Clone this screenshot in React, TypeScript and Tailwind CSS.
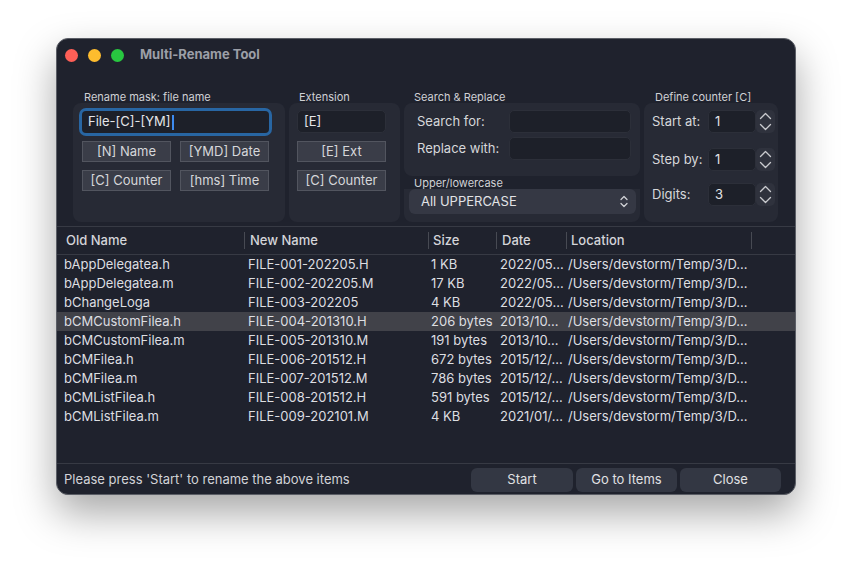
import React from "react";

const rows = [
  ["bAppDelegatea.h", "FILE-001-202205.H", "1 KB", "2022/05...", "/Users/devstorm/Temp/3/D..."],
  ["bAppDelegatea.m", "FILE-002-202205.M", "17 KB", "2022/05...", "/Users/devstorm/Temp/3/D..."],
  ["bChangeLoga", "FILE-003-202205", "4 KB", "2022/05...", "/Users/devstorm/Temp/3/D..."],
  ["bCMCustomFilea.h", "FILE-004-201310.H", "206 bytes", "2013/10...", "/Users/devstorm/Temp/3/D..."],
  ["bCMCustomFilea.m", "FILE-005-201310.M", "191 bytes", "2013/10...", "/Users/devstorm/Temp/3/D..."],
  ["bCMFilea.h", "FILE-006-201512.H", "672 bytes", "2015/12/...", "/Users/devstorm/Temp/3/D..."],
  ["bCMFilea.m", "FILE-007-201512.M", "786 bytes", "2015/12/...", "/Users/devstorm/Temp/3/D..."],
  ["bCMListFilea.h", "FILE-008-201512.H", "591 bytes", "2015/12/...", "/Users/devstorm/Temp/3/D..."],
  ["bCMListFilea.m", "FILE-009-202101.M", "4 KB", "2021/01/...", "/Users/devstorm/Temp/3/D..."],
];

function Btn({ children, w }: { children: React.ReactNode; w: string }) {
  return (
    <div
      className={`${w} h-[21px] flex items-center justify-center bg-[#3a3d48] border border-[#52555f] text-[13px] text-[#d6d7da]`}
    >
      {children}
    </div>
  );
}

function Stepper() {
  return (
    <div className="w-[19px] h-[23px] rounded-[5px] bg-[#2f323d] flex flex-col items-center justify-center gap-[3px]">
      <svg width="13" height="8" viewBox="0 0 13 8" fill="none">
        <path d="M1.5 6.5 L6.5 1.5 L11.5 6.5" stroke="#c9cace" strokeWidth="1.3" strokeLinecap="round" strokeLinejoin="round" />
      </svg>
      <svg width="13" height="8" viewBox="0 0 13 8" fill="none">
        <path d="M1.5 1.5 L6.5 6.5 L11.5 1.5" stroke="#c9cace" strokeWidth="1.3" strokeLinecap="round" strokeLinejoin="round" />
      </svg>
    </div>
  );
}

function CounterRow({ label, value }: { label: string; value: string }) {
  return (
    <div className="flex items-center h-[23px]">
      <span className="w-[56px] text-[13px] text-[#d6d7da]">{label}</span>
      <div className="w-[48px] h-[23px] rounded-[5px] bg-[#1d2029] border border-[#2c2f39] flex items-center pl-[6px] text-[13px] text-[#e2e3e6]">
        {value}
      </div>
      <Stepper />
    </div>
  );
}

export default function App() {
  return (
    <div className="w-[852px] h-[570px] bg-white pt-[38px] pl-[56px] font-['Inter','Noto_Sans',sans-serif]">
      <div className="w-[740px] h-[457px] rounded-[12px] bg-[#1f222d] border border-[#5b5e66] shadow-[0_18px_40px_rgba(0,0,0,0.35)] flex flex-col overflow-hidden">
        {/* title bar */}
        <div className="h-[32px] shrink-0 flex items-center pl-[8px]">
          <div className="flex gap-[10px]">
            <span className="w-[13px] h-[13px] rounded-full bg-[#fe5f57]" />
            <span className="w-[13px] h-[13px] rounded-full bg-[#febc2e]" />
            <span className="w-[13px] h-[13px] rounded-full bg-[#28c840]" />
          </div>
          <span className="ml-[16px] text-[13px] font-bold text-[#9c9fa7]">Multi-Rename Tool</span>
        </div>

        {/* options */}
        <div className="h-[155px] shrink-0 flex gap-[4px] pl-[16px] pt-[20px]">
          <div className="flex flex-col w-[212px]">
            <span className="h-[12px] leading-[12px] text-[11px] text-[#d0d1d5] pl-[11px]">Rename mask: file name</span>
            <div className="h-[119px] rounded-[8px] bg-[#272a35] pl-[9px] pt-[8px] flex flex-col">
              <div className="w-[187px] h-[22px] rounded-[4px] bg-[#1d2029] shadow-[0_0_0_3px_#2866a3] flex items-center pl-[6px] text-[13px] text-[#e4e5e8]">
                File-[C]-[YM]
                <span className="w-[2px] h-[15px] bg-[#3d8bf0] ml-[1px]" />
              </div>
              <div className="flex gap-[9px] mt-[8px]">
                <Btn w="w-[89px]">[N] Name</Btn>
                <Btn w="w-[89px]">[YMD] Date</Btn>
              </div>
              <div className="flex gap-[9px] mt-[8px]">
                <Btn w="w-[89px]">[C] Counter</Btn>
                <Btn w="w-[89px]">[hms] Time</Btn>
              </div>
            </div>
          </div>

          <div className="flex flex-col w-[111px]">
            <span className="h-[12px] leading-[12px] text-[11px] text-[#d0d1d5] pl-[10px]">Extension</span>
            <div className="h-[119px] rounded-[8px] bg-[#272a35] pl-[8px] pt-[7px] flex flex-col">
              <div className="w-[89px] h-[23px] rounded-[5px] bg-[#1d2029] border border-[#2c2f39] flex items-center pl-[6px] text-[13px] text-[#e4e5e8]">
                [E]
              </div>
              <div className="mt-[8px]">
                <Btn w="w-[89px]">[E] Ext</Btn>
              </div>
              <div className="mt-[8px]">
                <Btn w="w-[89px]">[C] Counter</Btn>
              </div>
            </div>
          </div>

          <div className="flex flex-col w-[236px]">
            <span className="h-[12px] leading-[12px] text-[11px] text-[#d0d1d5] pl-[10px]">Search &amp; Replace</span>
            <div className="h-[73px] rounded-[8px] bg-[#272a35] pl-[13px] pt-[7px] flex flex-col gap-[4px]">
              <div className="flex items-center">
                <span className="w-[92px] text-[13px] text-[#d6d7da]">Search for:</span>
                <div className="w-[122px] h-[23px] rounded-[5px] bg-[#1d2029] border border-[#2c2f39]" />
              </div>
              <div className="flex items-center">
                <span className="w-[92px] text-[13px] text-[#d6d7da]">Replace with:</span>
                <div className="w-[122px] h-[23px] rounded-[5px] bg-[#1d2029] border border-[#2c2f39]" />
              </div>
            </div>
            <span className="h-[12px] leading-[12px] text-[11px] text-[#d0d1d5] pl-[10px] mt-[1px]">Upper/lowercase</span>
            <div className="h-[33px] rounded-b-[8px] bg-[#272a35] pl-[5px] pr-[4px]">
              <div className="h-[25px] rounded-[6px] bg-[#353844] flex items-center justify-between pl-[12px] pr-[8px] text-[13px] text-[#e2e3e6]">
                All UPPERCASE
                <svg width="8" height="13" viewBox="0 0 8 13" fill="none">
                  <path d="M1 4.5 L4 1.5 L7 4.5" stroke="#d0d1d5" strokeWidth="1.3" strokeLinecap="round" strokeLinejoin="round" />
                  <path d="M1 8.5 L4 11.5 L7 8.5" stroke="#d0d1d5" strokeWidth="1.3" strokeLinecap="round" strokeLinejoin="round" />
                </svg>
              </div>
            </div>
          </div>

          <div className="flex flex-col w-[134px]">
            <span className="h-[12px] leading-[12px] text-[11px] text-[#d0d1d5] pl-[11px]">Define counter [C]</span>
            <div className="h-[119px] rounded-[8px] bg-[#272a35] pl-[8px] pt-[7px] flex flex-col gap-[15px]">
              <CounterRow label="Start at:" value="1" />
              <CounterRow label="Step by:" value="1" />
              <div className="-mt-[3px]">
                <CounterRow label="Digits:" value="3" />
              </div>
            </div>
          </div>
        </div>

        {/* table */}
        <div className="flex-1 border-t border-b border-[#373a44] flex flex-col text-[13px]">
          <div className="h-[28px] shrink-0 flex items-center border-b border-[#373a44] font-medium text-[#d4d5d9]">
            <div className="w-[187px] pl-[9px]">Old Name</div>
            <div className="w-[184px] pl-[5px] border-l border-[#474a53] h-[17px] leading-[17px]">New Name</div>
            <div className="w-[68px] pl-[4px] border-l border-[#474a53] h-[17px] leading-[17px]">Size</div>
            <div className="w-[70px] pl-[5px] border-l border-[#474a53] h-[17px] leading-[17px]">Date</div>
            <div className="w-[185px] pl-[4px] border-l border-[#474a53] h-[17px] leading-[17px]">Location</div>
            <div className="flex-1 border-l border-[#474a53] h-[17px]" />
          </div>
          {rows.map((r, i) => (
            <div
              key={i}
              className={`h-[19px] flex items-center text-[#dddee1] ${i === 3 ? "bg-[#414249]" : ""}`}
            >
              <div className="w-[187px] pl-[7px]">{r[0]}</div>
              <div className="w-[184px] pl-[4px]">{r[1]}</div>
              <div className="w-[68px] pl-[3px] whitespace-nowrap">{r[2]}</div>
              <div className="w-[70px] pl-[4px] whitespace-nowrap">{r[3]}</div>
              <div className="w-[185px] pl-[2px] whitespace-nowrap">{r[4]}</div>
            </div>
          ))}
        </div>

        {/* footer */}
        <div className="h-[30px] shrink-0 flex items-center pt-[2px] pl-[7px] pr-[14px]">
          <span className="flex-1 text-[13px] text-[#d2d3d7]">Please press 'Start' to rename the above items</span>
          <div className="flex gap-[3px]">
            <div className="w-[102px] h-[24px] rounded-[6px] bg-[#333743] flex items-center justify-center text-[13px] text-[#e0e1e4]">Start</div>
            <div className="w-[101px] h-[24px] rounded-[6px] bg-[#333743] flex items-center justify-center text-[13px] text-[#e0e1e4]">Go to Items</div>
            <div className="w-[101px] h-[24px] rounded-[6px] bg-[#333743] flex items-center justify-center text-[13px] text-[#e0e1e4]">Close</div>
          </div>
        </div>
      </div>
    </div>
  );
}
